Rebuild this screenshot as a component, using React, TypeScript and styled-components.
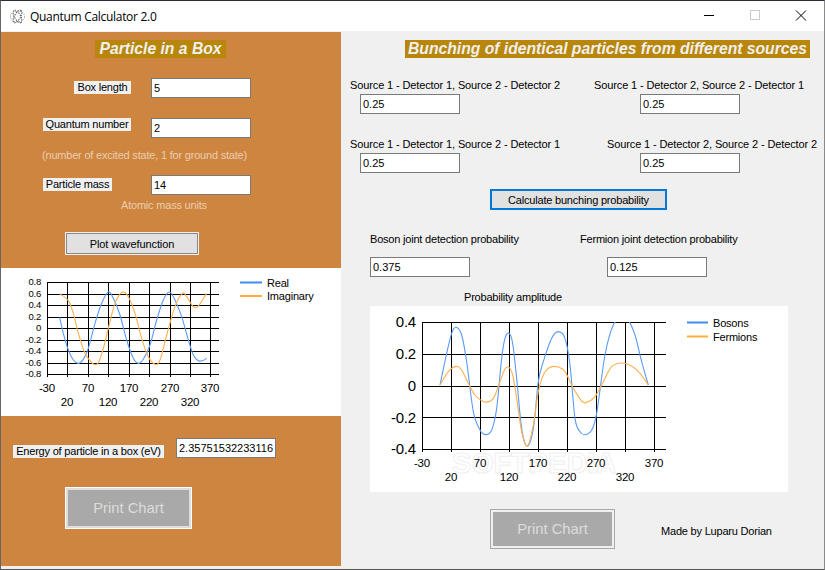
import * as React from "react";
import styled, { createGlobalStyle } from "styled-components";

const GlobalStyle = createGlobalStyle`
  html, body {
    margin: 0;
    padding: 0;
    background: #f0f0f0;
  }
  * {
    box-sizing: border-box;
  }
`;

const Window = styled.div`
  width: 825px;
  height: 570px;
  display: flex;
  flex-direction: column;
  background: #f0f0f0;
  border-top: 1px solid #2b2b3a;
  border-right: 1px solid #8a8a8a;
  border-bottom: 1px solid #555;
  border-left: 1px solid #666;
  font-family: "Liberation Sans", Arial, sans-serif;
  font-size: 11px;
  letter-spacing: -0.2px;
  color: #000;
  overflow: hidden;
`;
const TitleBar = styled.div`
  height: 30px;
  flex: none;
  background: #fff;
  display: flex;
  align-items: center;
  padding-left: 9px;
`;
const AppIcon = styled.svg`
  width: 15px;
  height: 15px;
  margin-right: 5px;
`;
const AppName = styled.span`
  font-family: "Open Sans", sans-serif;
  font-size: 12px;
  letter-spacing: -0.3px;
  flex: 1;
`;
const WindowButton = styled.svg`
  width: 46px;
  height: 30px;
  flex: none;
`;
const Body = styled.div`
  flex: 1;
  display: flex;
  min-height: 0;
`;
const LeftColumn = styled.div`
  width: 340px;
  flex: none;
  margin-top: 1px;
  display: flex;
  flex-direction: column;
`;
const OrangePanel = styled.div<{ $height: number; $top: number }>`
  height: ${p => p.$height}px;
  padding-top: ${p => p.$top}px;
  background: #cd853f;
`;
const ChartPanel = styled.div`
  height: 148px;
  background: #fff;
`;
const Heading = styled.div<{ $left: number; $width: number }>`
  width: ${p => p.$width}px;
  height: 18px;
  margin-left: ${p => p.$left}px;
  background: #b8860b;
  color: #f0f0f0;
  font-size: 15.7px;
  font-weight: bold;
  font-style: italic;
  letter-spacing: 0;
  line-height: 18px;
  text-align: center;
  white-space: nowrap;
`;
const FieldRow = styled.div<{ $top: number }>`
  display: flex;
  align-items: flex-start;
  margin-top: ${p => p.$top}px;
`;
const LabelCell = styled.div`
  width: 150px;
  flex: none;
`;
const FieldLabel = styled.div<{ $left: number; $width: number; $top: number }>`
  width: ${p => p.$width}px;
  height: 13px;
  margin-left: ${p => p.$left}px;
  margin-top: ${p => p.$top}px;
  background: #f0f0f0;
  line-height: 13px;
  text-align: center;
  white-space: nowrap;
`;
const TextField = styled.input<{ $width?: number }>`
  display: block;
  width: ${p => p.$width || 100}px;
  height: 20px;
  padding: 0 2px;
  background: #fff;
  border: 1px solid #7a7a7a;
  border-radius: 0;
  outline: none;
  font-family: "Liberation Sans", Arial, sans-serif;
  font-size: 11px;
  color: #000;
`;
const Hint = styled.div<{ $left: number; $top: number }>`
  margin-left: ${p => p.$left}px;
  margin-top: ${p => p.$top}px;
  line-height: 14px;
  color: #eccdb0;
  white-space: nowrap;
`;
const PlotButton = styled.button`
  display: block;
  width: 134px;
  height: 23px;
  margin: 20px 0 0 64px;
  padding: 0;
  background: #e1e1e1;
  border: 1px solid #f0f0f0;
  box-shadow: inset 0 0 0 1px #8a8a8a;
  font-family: "Liberation Sans", Arial, sans-serif;
  font-size: 11px;
  letter-spacing: -0.1px;
  color: #000;
`;
const EnergyRow = styled.div`
  display: flex;
  align-items: flex-end;
  padding-left: 12px;
`;
const EnergyLabel = styled.div`
  width: 151px;
  height: 13px;
  margin-right: 12px;
  background: #f0f0f0;
  line-height: 13px;
  text-align: center;
  white-space: nowrap;
`;
const PrintButton = styled.button<{ $width: number; $height: number; $edge: string; $gap: string; $left: number; $top: number }>`
  display: block;
  width: ${p => p.$width}px;
  height: ${p => p.$height}px;
  margin-left: ${p => p.$left}px;
  margin-top: ${p => p.$top}px;
  padding: 0;
  background: #a9a9a9;
  border: 1px solid ${p => p.$edge};
  box-shadow: inset 0 0 0 2px ${p => p.$gap};
  font-family: "Liberation Sans", Arial, sans-serif;
  font-size: 14.8px;
  color: #dcdcdc;
`;
const RightColumn = styled.div`
  flex: 1;
  padding-top: 9px;
  min-width: 0;
`;
const SourceRow = styled.div<{ $top: number }>`
  display: grid;
  grid-template-columns: 253px 1fr;
  margin-top: ${p => p.$top}px;
`;
const SourceCell = styled.div<{ $label: number; $field: number }>`
  display: flex;
  flex-direction: column;
  gap: 2px;
  white-space: nowrap;
  letter-spacing: -0.12px;
  & > span {
    display: block;
    line-height: 14px;
    margin-left: ${p => p.$label}px;
  }
  & > input {
    margin-left: ${p => p.$field}px;
  }
`;
const CalculateButton = styled.button`
  display: block;
  width: 177px;
  height: 21px;
  margin: 16px 0 0 149px;
  padding: 0;
  background: #e1e1e1;
  border: 2px solid #0078d7;
  font-family: "Liberation Sans", Arial, sans-serif;
  font-size: 11px;
  letter-spacing: -0.2px;
  color: #000;
`;
const ResultRow = styled.div`
  display: grid;
  grid-template-columns: 210px 1fr;
  margin: 22px 0 0 29px;
`;
const ResultCell = styled.div<{ $field: number }>`
  display: flex;
  flex-direction: column;
  gap: 11px;
  & > span {
    display: block;
    line-height: 14px;
  }
  & > input {
    margin-left: ${p => p.$field}px;
  }
`;
const ChartTitle = styled.div`
  margin: 13px 0 0 123px;
  line-height: 14px;
`;
const WhiteChart = styled.div`
  width: 418px;
  height: 186px;
  margin: 2px 0 0 29px;
  background: #fff;
`;
const BottomRow = styled.div`
  display: flex;
  align-items: center;
`;
const Credit = styled.div`
  margin: 21px 0 0 46px;
  white-space: nowrap;
`;
const ChartSvg = styled.svg`
  display: block;
  font-family: "Liberation Sans", Arial, sans-serif;
`;

type Pt = [number, number];

// smooth line through the points (catmull-rom to bezier)
const smooth = (pts: Pt[]) => {
  let d = `M${pts[0][0]} ${pts[0][1]}`;
  for (let i = 0; i < pts.length - 1; i++) {
    const p0 = pts[Math.max(i - 1, 0)];
    const p1 = pts[i];
    const p2 = pts[i + 1];
    const p3 = pts[Math.min(i + 2, pts.length - 1)];
    const c1x = p1[0] + (p2[0] - p0[0]) / 6;
    const c1y = p1[1] + (p2[1] - p0[1]) / 6;
    const c2x = p2[0] - (p3[0] - p1[0]) / 6;
    const c2y = p2[1] - (p3[1] - p1[1]) / 6;
    d += ` C${c1x.toFixed(2)} ${c1y.toFixed(2)} ${c2x.toFixed(2)} ${c2y.toFixed(2)} ${p2[0].toFixed(2)} ${p2[1].toFixed(2)}`;
  }
  return d;
};

const toPage = (pts: number[][], ox: number, oy: number): Pt[] =>
  pts.map(([x, y]) => [ox + x / 3, oy + y / 3] as Pt);

const realCurve = toPage(
  [[119,142],[130,190],[145,240],[160,270],[175,280],[190,268],[205,235],[225,160],[245,100],[265,66],[280,85],[300,135],[320,210],[340,265],[355,280],[370,268],[390,225],[410,150],[430,90],[448,66],[465,90],[485,140],[505,210],[520,255],[535,272],[548,272],[560,265]],
  20, 270
);
const imaginaryCurve = toPage(
  [[119,71],[145,92],[160,130],[175,190],[195,250],[210,272],[222,283],[235,278],[250,235],[265,175],[285,100],[307,67],[325,80],[345,130],[365,205],[385,260],[405,283],[420,270],[440,195],[465,110],[487,70],[500,80],[520,110],[535,108],[560,70]],
  20, 270
);
const bosonCurve = toPage(
  [[225,300],[245,205],[260,145],[273,127],[290,150],[305,230],[325,380],[345,435],[362,449],[380,435],[395,370],[410,220],[420,160],[432,145],[443,175],[455,280],[470,430],[487,483],[505,430],[520,290],[535,230],[560,160],[580,140],[600,160],[615,240],[630,400],[645,440],[660,449],[680,435],[695,385],[720,210],[745,120],[775,92],[790,105],[810,150],[830,230],[850,300]],
  365, 285
);
const fermionCurve = toPage(
  [[225,300],[250,260],[273,244],[290,255],[310,295],[330,330],[360,351],[385,340],[405,290],[420,252],[432,247],[443,270],[455,340],[470,440],[487,483],[505,420],[520,320],[535,270],[555,247],[580,246],[600,260],[625,310],[650,348],[665,352],[690,335],[715,290],[740,245],[770,234],[800,243],[825,265],[850,300]],
  365, 285
);

const xLabels = ["-30", "20", "70", "120", "170", "220", "270", "320", "370"];

type ChartProps = {
  id: string;
  box: [number, number, number, number];
  left: number;
  right: number;
  top: number;
  bottom: number;
  gridX: number[];
  yLabels: string[];
  yFont: number;
  labelY: [number, number];
  legendX: number;
  legendY: [number, number];
  legendWidth: number;
  names: [string, string];
  curves: [Pt[], Pt[]];
  children?: React.ReactNode;
};

const Chart = ({ id, box, left, right, top, bottom, gridX, yLabels, yFont, labelY, legendX, legendY, legendWidth, names, curves, children }: ChartProps) => {
  const step = (bottom - top) / (yLabels.length - 1);
  return (
    <ChartSvg width={box[2]} height={box[3]} viewBox={box.join(" ")}>
      <defs>
        <clipPath id={id}>
          <rect x={left} y={top} width={right - left} height={bottom - top} />
        </clipPath>
      </defs>
      {children}
      <g stroke="#000" strokeWidth={1} shapeRendering="crispEdges">
        {yLabels.map((_, i) => {
          const y = Math.round(top + i * step) + 0.5;
          return <line key={i} x1={left} x2={right} y1={y} y2={y} />;
        })}
        {gridX.map(x => (
          <line key={x} x1={x + 0.5} x2={x + 0.5} y1={top} y2={bottom + 3} />
        ))}
      </g>
      <g fill="none" strokeWidth={1.1} clipPath={`url(#${id})`}>
        <path d={smooth(curves[0])} stroke="#5b9bf5" />
        <path d={smooth(curves[1])} stroke="#fdb04d" />
      </g>
      <g fontSize={yFont} textAnchor="end" fill="#000">
        {yLabels.map((t, i) => (
          <text key={t} x={left - 6} y={top + i * step + yFont * 0.36}>
            {t}
          </text>
        ))}
      </g>
      <g fontSize={11.5} textAnchor="middle" fill="#000">
        {gridX.map((x, i) => (
          <text key={x} x={x} y={labelY[i % 2] + 4}>
            {xLabels[i]}
          </text>
        ))}
      </g>
      <g fontSize={11} fill="#000">
        <line x1={legendX} x2={legendX + legendWidth} y1={legendY[0]} y2={legendY[0]} stroke="#3f8cf3" strokeWidth={2} />
        <text x={legendX + legendWidth + 5} y={legendY[0] + 4}>{names[0]}</text>
        <line x1={legendX} x2={legendX + legendWidth} y1={legendY[1]} y2={legendY[1]} stroke="#ffad3b" strokeWidth={2} />
        <text x={legendX + legendWidth + 5} y={legendY[1] + 4}>{names[1]}</text>
      </g>
    </ChartSvg>
  );
};

const field = (v: string, width?: number) => <TextField readOnly value={v} $width={width} />;

export default function App() {
  return (
    <>
      <GlobalStyle />
      <Window>
        <TitleBar>
          <AppIcon viewBox="0 0 15 15" fill="none" stroke="#555" strokeWidth="1" strokeDasharray="1.4 1">
            <ellipse cx="7.5" cy="7.5" rx="7" ry="3" transform="rotate(60 7.5 7.5)" />
            <ellipse cx="7.5" cy="7.5" rx="7" ry="3" transform="rotate(-60 7.5 7.5)" />
            <ellipse cx="7.5" cy="7.5" rx="7" ry="5.5" stroke="#999" />
          </AppIcon>
          <AppName>Quantum Calculator 2.0</AppName>
          <WindowButton viewBox="0 0 46 30">
            <line x1="18" x2="28" y1="14.5" y2="14.5" stroke="#000" />
          </WindowButton>
          <WindowButton viewBox="0 0 46 30">
            <rect x="18.5" y="9.5" width="9" height="9" fill="none" stroke="#ccc" />
          </WindowButton>
          <WindowButton viewBox="0 0 46 30">
            <path d="M18 9.5 L28 19.5 M28 9.5 L18 19.5" stroke="#000" fill="none" />
          </WindowButton>
        </TitleBar>
        <Body>
          <LeftColumn>
            <OrangePanel $height={236} $top={8}>
              <Heading $left={94} $width={131}>Particle in a Box</Heading>
              <FieldRow $top={20}>
                <LabelCell>
                  <FieldLabel $left={73} $width={57} $top={3}>Box length</FieldLabel>
                </LabelCell>
                {field("5")}
              </FieldRow>
              <FieldRow $top={20}>
                <LabelCell>
                  <FieldLabel $left={42} $width={88} $top={0}>Quantum number</FieldLabel>
                </LabelCell>
                {field("2")}
              </FieldRow>
              <Hint $left={41} $top={10}>(number of excited state, 1 for ground state)</Hint>
              <FieldRow $top={13}>
                <LabelCell>
                  <FieldLabel $left={42} $width={69} $top={3}>Particle mass</FieldLabel>
                </LabelCell>
                {field("14")}
              </FieldRow>
              <Hint $left={120} $top={3}>Atomic mass units</Hint>
              <PlotButton>Plot wavefunction</PlotButton>
            </OrangePanel>
            <ChartPanel>
              <Chart
                id="wave"
                box={[1, 268, 340, 148]}
                left={47}
                right={219}
                top={282}
                bottom={374}
                gridX={[47, 67, 88, 108, 129, 149, 170, 190, 210]}
                yLabels={["0.8", "0.6", "0.4", "0.2", "0", "-0.2", "-0.4", "-0.6", "-0.8"]}
                yFont={9.5}
                labelY={[388, 402]}
                legendX={240}
                legendY={[282.5, 296]}
                legendWidth={22}
                names={["Real", "Imaginary"]}
                curves={[realCurve, imaginaryCurve]}
              />
            </ChartPanel>
            <OrangePanel $height={150} $top={22}>
              <EnergyRow>
                <EnergyLabel>Energy of particle in a box (eV)</EnergyLabel>
                {field("2.35751532233116", 100)}
              </EnergyRow>
              <PrintButton $width={127} $height={42} $edge="#fff" $gap="#dedede" $left={64} $top={29}>
                Print Chart
              </PrintButton>
            </OrangePanel>
          </LeftColumn>
          <RightColumn>
            <Heading $left={64} $width={405}>Bunching of identical particles from different sources</Heading>
            <SourceRow $top={20}>
              <SourceCell $label={9} $field={19}>
                <span>Source 1 - Detector 1, Source 2 - Detector 2</span>
                {field("0.25")}
              </SourceCell>
              <SourceCell $label={0} $field={46}>
                <span>Source 1 - Detector 2, Source 2 - Detector 1</span>
                {field("0.25")}
              </SourceCell>
            </SourceRow>
            <SourceRow $top={23}>
              <SourceCell $label={9} $field={19}>
                <span>Source 1 - Detector 1, Source 2 - Detector 1</span>
                {field("0.25")}
              </SourceCell>
              <SourceCell $label={13} $field={46}>
                <span>Source 1 - Detector 2, Source 2 - Detector 2</span>
                {field("0.25")}
              </SourceCell>
            </SourceRow>
            <CalculateButton>Calculate bunching probability</CalculateButton>
            <ResultRow>
              <ResultCell $field={0}>
                <span>Boson joint detection probability</span>
                {field("0.375")}
              </ResultCell>
              <ResultCell $field={27}>
                <span>Fermion joint detection probability</span>
                {field("0.125")}
              </ResultCell>
            </ResultRow>
            <ChartTitle>Probability amplitude</ChartTitle>
            <WhiteChart>
              <Chart
                id="amplitude"
                box={[370, 306, 418, 186]}
                left={422}
                right={666}
                top={322}
                bottom={449}
                gridX={[422, 451, 480, 509, 538, 567, 596, 625, 654]}
                yLabels={["0.4", "0.2", "0", "-0.2", "-0.4"]}
                yFont={15}
                labelY={[463, 477]}
                legendX={687}
                legendY={[322.5, 336.5]}
                legendWidth={21}
                names={["Bosons", "Fermions"]}
                curves={[bosonCurve, fermionCurve]}
              >
                <text x="452" y="473" fontSize="29" fontWeight="bold" fill="#fff" stroke="#efefef" strokeWidth="1">
                  SOFTPEDIA
                </text>
              </Chart>
            </WhiteChart>
            <BottomRow>
              <PrintButton $width={125} $height={40} $edge="#a9a9a9" $gap="#f0f0f0" $left={149} $top={17}>
                Print Chart
              </PrintButton>
              <Credit>Made by Luparu Dorian</Credit>
            </BottomRow>
          </RightColumn>
        </Body>
      </Window>
    </>
  );
}
